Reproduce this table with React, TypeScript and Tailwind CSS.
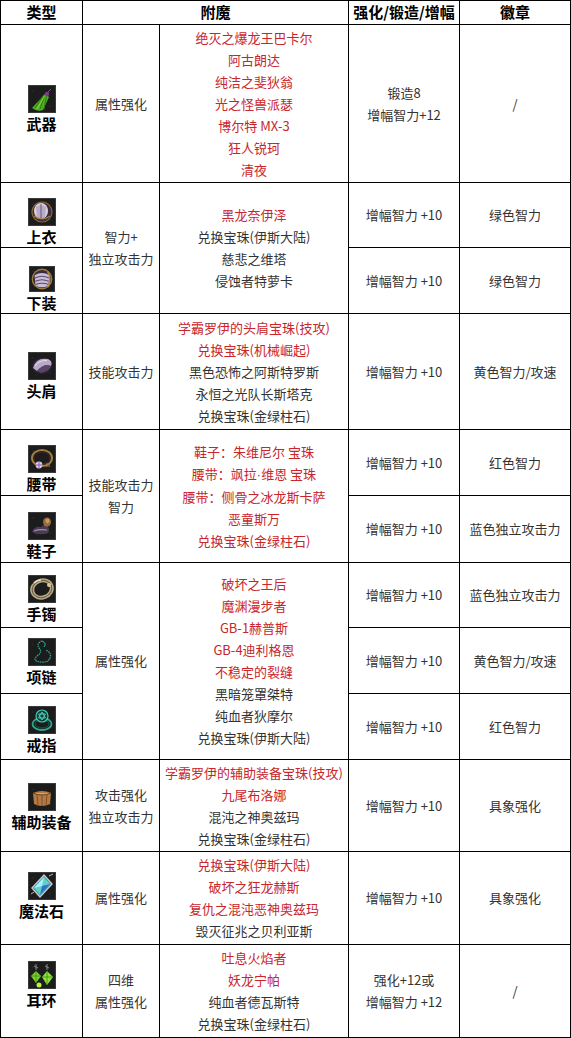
import type { ReactNode } from 'react';

type Line = { t: ReactNode; red?: boolean };

const R = (t: ReactNode): Line => ({ t, red: true });
const B = (t: ReactNode): Line => ({ t });

// 图标：28x28 的小图
function IconFrame({ children }: { children: ReactNode }) {
  return (
    <svg width="28" height="28" viewBox="0 0 28 28" className="block">
      <rect x="0" y="0" width="28" height="28" fill="#1c1c1c" />
      <rect x="0.5" y="0.5" width="27" height="27" fill="none" stroke="#3b3b3b" />
      <circle cx="5" cy="6" r="0.6" fill="#444" />
      <circle cx="22" cy="21" r="0.6" fill="#444" />
      <circle cx="9" cy="23" r="0.5" fill="#404040" />
      {children}
    </svg>
  );
}

const icons: Record<string, ReactNode> = {
  weapon: (
    <IconFrame>
      <path d="M17 9 L21 12 L15 25 Q9 27 4 23 Z" fill="#4fae22" />
      <path d="M17 10 L12 24 M18.5 11 L16 24.5 M16 9.5 L7 23" stroke="#2f7a12" strokeWidth="1" />
      <path d="M17.5 9.5 L9 24" stroke="#8ee24a" strokeWidth="0.8" />
      <circle cx="19" cy="9" r="2.2" fill="#8a2fa0" />
      <path d="M20 7 L23 4" stroke="#6a6a6a" strokeWidth="1" />
    </IconFrame>
  ),
  top: (
    <IconFrame>
      <circle cx="14" cy="14" r="10" fill="#3a2c40" stroke="#8a6a34" strokeWidth="1.2" />
      <ellipse cx="13" cy="13" rx="7" ry="8" fill="#d9d2e2" />
      <path d="M8 9 Q13 5 18 9 L17 20 Q13 22 9 20 Z" fill="#b8aac8" />
      <path d="M13 6 L13 21" stroke="#6c5a7a" strokeWidth="1" />
      <path d="M6 18 Q14 24 22 18" stroke="#a07c3c" strokeWidth="1.2" fill="none" />
    </IconFrame>
  ),
  bottom: (
    <IconFrame>
      <circle cx="14" cy="14" r="10.5" fill="#3a2c40" stroke="#a07c3c" strokeWidth="1.4" />
      <path d="M6 10 Q14 5 22 10 L21 21 Q14 25 7 21 Z" fill="#c9bdd6" />
      <path d="M6.5 13 Q14 9 21.5 13 M6.8 16.5 Q14 13 21.2 16.5 M7.2 20 Q14 17 21 20" stroke="#5e4a6c" strokeWidth="1.1" fill="none" />
      <path d="M20 6 Q25 14 20 23" stroke="#b08a48" strokeWidth="1.6" fill="none" />
    </IconFrame>
  ),
  shoulder: (
    <IconFrame>
      <ellipse cx="14" cy="14" rx="10" ry="8" fill="#2c2232" />
      <path d="M5 16 Q8 5 20 7 Q25 9 23 14 Q16 11 9 19 Z" fill="#b9a9c6" />
      <path d="M9 19 Q16 11 23 14 Q22 19 13 21 Z" fill="#5a4668" />
      <path d="M7 14 Q11 8 19 8.5" stroke="#e6dcef" strokeWidth="1" fill="none" />
    </IconFrame>
  ),
  belt: (
    <IconFrame>
      <ellipse cx="14" cy="13" rx="10" ry="8" fill="none" stroke="#a47c44" strokeWidth="2" />
      <ellipse cx="14" cy="13" rx="8" ry="6" fill="none" stroke="#3a2c20" strokeWidth="1" />
      <circle cx="11" cy="20" r="3.4" fill="#d8cce8" />
      <path d="M11 16.6 L11 23.4 M7.6 20 L14.4 20" stroke="#8a62a8" strokeWidth="1" />
      <path d="M18 19 L22 19 M18 21 L22 21" stroke="#a47c44" strokeWidth="1" />
    </IconFrame>
  ),
  shoes: (
    <IconFrame>
      <path d="M4 20 Q6 14 13 15 Q16 12 19 12 L21 17 Q22 22 16 22 Q8 23 4 20 Z" fill="#4a3a52" />
      <path d="M6 19 Q11 17 19 18" stroke="#a590b8" strokeWidth="1.2" fill="none" />
      <ellipse cx="19" cy="10" rx="4" ry="4.5" fill="#9a6a3c" />
      <ellipse cx="19.5" cy="9" rx="2" ry="2.2" fill="#c59a66" />
    </IconFrame>
  ),
  bracelet: (
    <IconFrame>
      <ellipse cx="14" cy="14" rx="10" ry="8.5" fill="none" stroke="#b8a888" strokeWidth="4" transform="rotate(-20 14 14)" />
      <ellipse cx="14" cy="14" rx="10" ry="8.5" fill="none" stroke="#6a5a3c" strokeWidth="1" transform="rotate(-20 14 14)" />
      <path d="M6 8 Q9 5 13 5" stroke="#eae0c8" strokeWidth="1.4" fill="none" />
      <circle cx="21" cy="10" r="2" fill="#d8c8a0" />
    </IconFrame>
  ),
  necklace: (
    <IconFrame>
      <path d="M14 3 Q8 5 11 10 Q15 14 9 18 Q4 23 12 24 Q20 25 22 20 Q24 15 18 12" fill="none" stroke="#2fb39c" strokeWidth="1.2" strokeDasharray="1.4 0.8" />
      <path d="M14 3 Q19 5 16 9" fill="none" stroke="#2fb39c" strokeWidth="1" />
    </IconFrame>
  ),
  ring: (
    <IconFrame>
      <ellipse cx="14" cy="18" rx="9.5" ry="6" fill="none" stroke="#2aa893" strokeWidth="1.8" />
      <ellipse cx="14" cy="18" rx="7" ry="4" fill="none" stroke="#156a5c" strokeWidth="0.8" />
      <circle cx="14" cy="10" r="6" fill="#0d3d36" stroke="#3fd0b8" strokeWidth="1.2" />
      <path d="M14 6 L17.5 12 L10.5 12 Z M14 14 L10.5 8 L17.5 8 Z" fill="none" stroke="#5fe6cc" strokeWidth="0.8" />
    </IconFrame>
  ),
  support: (
    <IconFrame>
      <path d="M5 10 Q14 6 23 10 L22 21 Q14 25 6 21 Z" fill="#b47a44" />
      <path d="M5 10 Q14 14 23 10" stroke="#6e4220" strokeWidth="1" fill="#d8a06a" />
      <path d="M14 12 L14 23 M9 11.5 L10 22 M19 11.5 L18 22" stroke="#7a4a24" strokeWidth="0.9" />
    </IconFrame>
  ),
  magic: (
    <IconFrame>
      <path d="M16 3 L24 12 L12 25 L4 16 Z" fill="#3a8a9a" stroke="#c8c8d0" strokeWidth="1.4" />
      <path d="M16 5 L22 12 L12 23 L6 16 Z" fill="#5fd2c8" />
      <path d="M16 5 L14 14 L6 16 Z" fill="#a8f0ff" />
      <path d="M14 14 L22 12 L12 23 Z" fill="#2f72c8" />
      <path d="M21 4 L25 2 M3 22 L6 20" stroke="#bbbbbb" strokeWidth="1" />
    </IconFrame>
  ),
  earring: (
    <IconFrame>
      <path d="M8 3 L8 9 M19 3 L19 9 M6 5 L10 7 M17 5 L21 7" stroke="#8a8a8a" strokeWidth="1" />
      <path d="M3 15 L8 10 L13 15 L8 22 Z" fill="#7ad22a" />
      <path d="M14 16 L19 10 L25 16 L19 24 Z" fill="#8ee23a" />
      <path d="M8 10 L8 22 M3 15 L13 15 M19 10 L19 24 M14 16 L25 16" stroke="#3f8a14" strokeWidth="0.8" />
      <circle cx="11" cy="24" r="2.5" fill="#b6f24a" />
    </IconFrame>
  ),
};

function Lines({ lines }: { lines: Line[] }) {
  return (
    <div className="flex flex-col items-center">
      {lines.map((l, i) => (
        <div key={i} className={`whitespace-nowrap leading-[22px] ${l.red ? 'text-[#c8262b]' : 'text-[#333]'}`}>
          {l.t}
        </div>
      ))}
    </div>
  );
}

function Cell({ className = '', children }: { className?: string; children?: ReactNode }) {
  return (
    <div className={`flex items-center justify-center bg-white text-[13px] ${className}`}>
      {children}
    </div>
  );
}

function Item({ icon, name, pt }: { icon: string; name: string; pt: string }) {
  return (
    <div className={`flex flex-col items-center justify-start overflow-hidden bg-white ${pt}`}>
      {icons[icon]}
      <div className="mt-[1px] text-[15px] font-bold leading-[20px] text-black">{name}</div>
    </div>
  );
}

export default function App() {
  return (
    <div className="w-[571px] bg-white font-['Noto_Sans_CJK_SC','Noto_Sans',sans-serif]">
      <div className="grid grid-cols-[81px_76px_188px_110px_110px] grid-rows-[23px_157px_64px_65px_115px_65px_66px_64px_65px_65px_91px_92px_92px] gap-[1px] bg-black p-[1px]">
        {/* 表头 */}
        <Cell className="text-[15px] font-bold text-black">类型</Cell>
        <Cell className="col-span-2 text-[15px] font-bold text-black">附魔</Cell>
        <Cell className="text-[15px] font-bold text-black">强化/锻造/增幅</Cell>
        <Cell className="text-[15px] font-bold text-black">徽章</Cell>

        {/* 武器 */}
        <Item icon="weapon" name="武器" pt="pt-[60px]" />
        <Cell><Lines lines={[B('属性强化')]} /></Cell>
        <Cell>
          <Lines
            lines={[
              R('绝灭之爆龙王巴卡尔'),
              R('阿古朗达'),
              R('纯洁之斐狄翁'),
              R('光之怪兽派瑟'),
              R('博尔特 MX-3'),
              R('狂人锐珂'),
              R('清夜'),
            ]}
          />
        </Cell>
        <Cell><Lines lines={[B('锻造8'), B('增幅智力+12')]} /></Cell>
        <Cell><Lines lines={[B('/')]} /></Cell>

        {/* 上衣 / 下装 */}
        <Item icon="top" name="上衣" pt="pt-[15px]" />
        <Cell className="row-span-2"><Lines lines={[B('智力+'), B('独立攻击力')]} /></Cell>
        <Cell className="row-span-2">
          <Lines lines={[R('黑龙奈伊泽'), B('兑换宝珠(伊斯大陆)'), B('慈悲之维塔'), B('侵蚀者特萝卡')]} />
        </Cell>
        <Cell><Lines lines={[B('增幅智力 +10')]} /></Cell>
        <Cell><Lines lines={[B('绿色智力')]} /></Cell>
        <Item icon="bottom" name="下装" pt="pt-[18px]" />
        <Cell><Lines lines={[B('增幅智力 +10')]} /></Cell>
        <Cell><Lines lines={[B('绿色智力')]} /></Cell>

        {/* 头肩 */}
        <Item icon="shoulder" name="头肩" pt="pt-[38px]" />
        <Cell><Lines lines={[B('技能攻击力')]} /></Cell>
        <Cell>
          <Lines
            lines={[
              R('学霸罗伊的头肩宝珠(技攻)'),
              R('兑换宝珠(机械崛起)'),
              B('黑色恐怖之阿斯特罗斯'),
              B('永恒之光队长斯塔克'),
              B('兑换宝珠(金绿柱石)'),
            ]}
          />
        </Cell>
        <Cell><Lines lines={[B('增幅智力 +10')]} /></Cell>
        <Cell><Lines lines={[B('黄色智力/攻速')]} /></Cell>

        {/* 腰带 / 鞋子 */}
        <Item icon="belt" name="腰带" pt="pt-[15px]" />
        <Cell className="row-span-2"><Lines lines={[B('技能攻击力'), B('智力')]} /></Cell>
        <Cell className="row-span-2">
          <Lines
            lines={[
              R('鞋子：朱维尼尔 宝珠'),
              R(
                <>
                  腰带：飒拉<span className="font-['Liberation_Sans',sans-serif]">·</span>维恩 宝珠
                </>
              ),
              R('腰带：侧骨之冰龙斯卡萨'),
              R('恶童斯万'),
              R('兑换宝珠(金绿柱石)'),
            ]}
          />
        </Cell>
        <Cell><Lines lines={[B('增幅智力 +10')]} /></Cell>
        <Cell><Lines lines={[B('红色智力')]} /></Cell>
        <Item icon="shoes" name="鞋子" pt="pt-[16px]" />
        <Cell><Lines lines={[B('增幅智力 +10')]} /></Cell>
        <Cell><Lines lines={[B('蓝色独立攻击力')]} /></Cell>

        {/* 手镯 / 项链 / 戒指 */}
        <Item icon="bracelet" name="手镯" pt="pt-[12px]" />
        <Cell className="row-span-3"><Lines lines={[B('属性强化')]} /></Cell>
        <Cell className="row-span-3">
          <Lines
            lines={[
              R('破坏之王后'),
              R('魔渊漫步者'),
              R('GB-1赫普斯'),
              R('GB-4迪利格恩'),
              R('不稳定的裂缝'),
              B('黑暗笼罩桀特'),
              B('纯血者狄摩尔'),
              B('兑换宝珠(伊斯大陆)'),
            ]}
          />
        </Cell>
        <Cell><Lines lines={[B('增幅智力 +10')]} /></Cell>
        <Cell><Lines lines={[B('蓝色独立攻击力')]} /></Cell>
        <Item icon="necklace" name="项链" pt="pt-[10px]" />
        <Cell><Lines lines={[B('增幅智力 +10')]} /></Cell>
        <Cell><Lines lines={[B('黄色智力/攻速')]} /></Cell>
        <Item icon="ring" name="戒指" pt="pt-[12px]" />
        <Cell><Lines lines={[B('增幅智力 +10')]} /></Cell>
        <Cell><Lines lines={[B('红色智力')]} /></Cell>

        {/* 辅助装备 */}
        <Item icon="support" name="辅助装备" pt="pt-[23px]" />
        <Cell><Lines lines={[B('攻击强化'), B('独立攻击力')]} /></Cell>
        <Cell>
          <Lines
            lines={[
              R('学霸罗伊的辅助装备宝珠(技攻)'),
              R('九尾布洛娜'),
              B('混沌之神奥兹玛'),
              B('兑换宝珠(金绿柱石)'),
            ]}
          />
        </Cell>
        <Cell><Lines lines={[B('增幅智力 +10')]} /></Cell>
        <Cell><Lines lines={[B('具象强化')]} /></Cell>

        {/* 魔法石 */}
        <Item icon="magic" name="魔法石" pt="pt-[20px]" />
        <Cell><Lines lines={[B('属性强化')]} /></Cell>
        <Cell>
          <Lines
            lines={[
              R('兑换宝珠(伊斯大陆)'),
              R('破坏之狂龙赫斯'),
              R('复仇之混沌恶神奥兹玛'),
              B('毁灭征兆之贝利亚斯'),
            ]}
          />
        </Cell>
        <Cell><Lines lines={[B('增幅智力 +10')]} /></Cell>
        <Cell><Lines lines={[B('具象强化')]} /></Cell>

        {/* 耳环 */}
        <Item icon="earring" name="耳环" pt="pt-[16px]" />
        <Cell><Lines lines={[B('四维'), B('属性强化')]} /></Cell>
        <Cell>
          <Lines lines={[R('吐息火焰者'), R('妖龙宁帕'), B('纯血者德瓦斯特'), B('兑换宝珠(金绿柱石)')]} />
        </Cell>
        <Cell><Lines lines={[B('强化+12或'), B('增幅智力 +12')]} /></Cell>
        <Cell><Lines lines={[B('/')]} /></Cell>
      </div>
    </div>
  );
}
